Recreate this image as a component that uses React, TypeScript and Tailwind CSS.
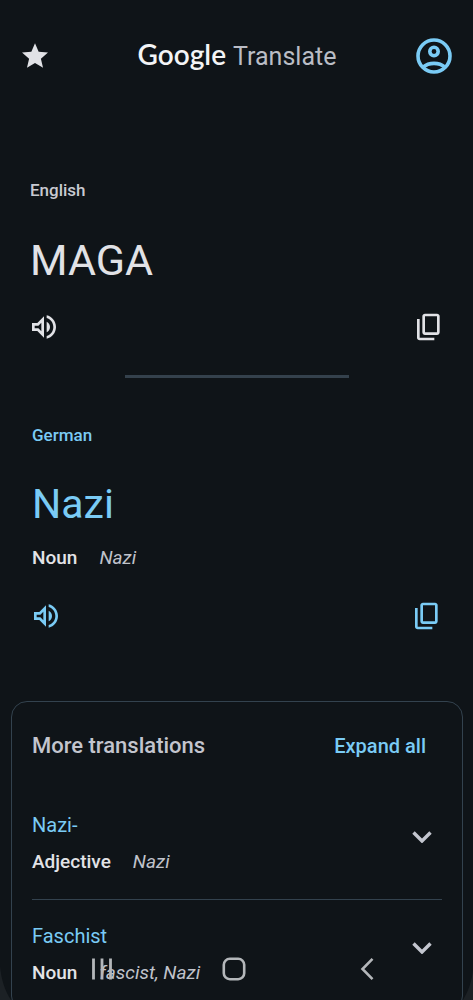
function SpeakerIcon() {
  return (
    <svg viewBox="0 0 24 24" className="size-8" fill="currentColor" aria-hidden="true">
      <path d="M3 9v6h4l5 5V4L7 9H3zm7-.17v6.34L7.83 13H5v-2h2.83L10 8.83zM16.5 12A4.5 4.5 0 0014 7.97v8.05c1.48-.73 2.5-2.25 2.5-4.02zM14 3.23v2.06c2.89.86 5 3.54 5 6.71s-2.11 5.85-5 6.71v2.06c4.01-.91 7-4.49 7-8.77s-2.99-7.86-7-8.77z" />
    </svg>
  );
}

function CopyIcon() {
  return (
    <svg viewBox="0 -960 960 960" className="size-8" fill="currentColor" aria-hidden="true">
      <path d="M360-240q-33 0-56.500-23.500T280-320v-480q0-33 23.500-56.500T360-880h360q33 0 56.500 23.500T800-800v480q0 33-23.500 56.500T720-240H360Zm0-80h360v-480H360v480ZM200-80q-33 0-56.500-23.500T120-160v-560h80v560h440v80H200Z" />
    </svg>
  );
}

function AccountIcon() {
  return (
    <svg viewBox="0 0 36 36" className="size-9" fill="none" stroke="currentColor" strokeWidth="3.600" aria-hidden="true">
      <circle cx="18" cy="18" r="16" />
      <circle cx="18" cy="13.500" r="4.200" />
      <path d="M7 29.200C9.800 26.800 13.600 25.400 18 25.400s8.200 1.400 11 3.800" />
    </svg>
  );
}

function ChevronIcon() {
  return (
    <svg viewBox="0 0 20 12" className="h-3 w-5" fill="none" stroke="currentColor" strokeWidth="3.400" aria-hidden="true">
      <path d="M1.500 1.500 10 10l8.500-8.500" />
    </svg>
  );
}

function Actions({ word }: { word: string }) {
  return (
    <div className="flex items-center justify-between">
      <button type="button" aria-label={`Listen to ${word}`}>
        <SpeakerIcon />
      </button>
      <button type="button" aria-label={`Copy ${word}`}>
        <CopyIcon />
      </button>
    </div>
  );
}

function Meaning({ kind, text }: { kind: string; text: string }) {
  return (
    <p className="flex gap-[22px] text-[19px] leading-6">
      <span className="font-medium text-[#e2e3e7]">{kind}</span>
      <i className="text-[#c0c3cb]">{text}</i>
    </p>
  );
}

function Translation({ word, kind, text }: { word: string; kind: string; text: string }) {
  return (
    <li className="flex justify-between">
      <div>
        <h3 className="mb-[11px] text-[20px] leading-7 text-[#7acbf5]">{word}</h3>
        <Meaning kind={kind} text={text} />
      </div>
      <button type="button" aria-label={`Expand ${word}`} className="mt-5 mr-2.5 self-start text-[#c3c6cf]">
        <ChevronIcon />
      </button>
    </li>
  );
}

export default function App() {
  return (
    <div className="relative flex min-h-screen flex-col overflow-hidden bg-[#0f1418] font-['Roboto',sans-serif] text-[#e1e2e6]">
      <header className="flex items-center justify-between pt-9 pr-[21px] pl-[22px]">
        <button type="button" aria-label="Saved" className="w-9">
          <svg viewBox="2 2 20 19" className="h-[25px] w-[26px]" fill="currentColor" aria-hidden="true">
            <path d="M12 17.270 18.180 21l-1.640-7.030L22 9.240l-7.190-.610L12 2 9.190 8.630 2 9.240l5.460 4.730L5.820 21z" />
          </svg>
        </button>
        <h1 className="flex items-baseline gap-[7px] leading-9">
          <span className="font-['Lato',sans-serif] text-[28px] font-semibold text-[#f3f4f6]">Google</span>
          <span className="text-[25px] text-[#babdc5]">Translate</span>
        </h1>
        <button type="button" aria-label="Account" className="text-[#7acbf5]">
          <AccountIcon />
        </button>
      </header>

      <main className="flex flex-1 flex-col">
        <section className="mt-[103px] px-7">
          <h2 className="pl-0.5 text-[17px] leading-6 font-medium text-[#c8cad1]">English</h2>
          <p className="mt-8 mb-[25px] pl-0.5 text-[43px] leading-[52px]">MAGA</p>
          <Actions word="MAGA" />
        </section>

        <hr className="mx-auto mt-8 h-[3px] w-56 border-0 bg-[#34414c]" />

        <section className="mt-[45px] px-[30px] text-[#7acbf5]">
          <h2 className="pl-0.5 text-[17px] leading-6 font-medium">German</h2>
          <p className="mt-[31px] mb-4 pl-0.5 text-[41px] leading-[52px]">Nazi</p>
          <div className="mb-[30px] pl-0.5">
            <Meaning kind="Noun" text="Nazi" />
          </div>
          <Actions word="Nazi" />
        </section>

        <section className="mt-[69px] mr-2.5 -mb-3 ml-[11px] flex-1 rounded-2xl border border-[#33424e] px-5 pt-7 pb-6">
          <div className="mb-[49px] flex items-center justify-between">
            <h2 className="text-[22px] leading-8 font-medium text-[#c3c5ce]">More translations</h2>
            <button type="button" className="mr-4 text-[20px] leading-8 font-medium text-[#7acbf5]">
              Expand all
            </button>
          </div>
          <ul>
            <Translation word="Nazi-" kind="Adjective" text="Nazi" />
            <li aria-hidden="true" className="mt-[25px] mb-[22px] h-px bg-[#33424e]" />
            <Translation word="Faschist" kind="Noun" text="fascist, Nazi" />
          </ul>
        </section>
      </main>

      <svg viewBox="0 0 11 34" className="absolute bottom-0 left-0 h-[34px] w-[11px]" fill="#1c2125" aria-hidden="true">
        <path d="M0 0C1 13 5 25 11 34H0z" />
      </svg>
      <svg viewBox="0 0 10 34" className="absolute right-0 bottom-0 h-[34px] w-2.5" fill="#1c2125" aria-hidden="true">
        <path d="M10 4C9 15 5 26 0 34H10z" />
      </svg>

      <nav className="fixed inset-x-0 bottom-[19px] grid grid-cols-3 pr-10 pl-9 text-[#b4b7ba]">
        <button type="button" aria-label="Recent apps" className="flex justify-center">
          <svg viewBox="0 0 20 24" className="h-6 w-5" fill="none" stroke="currentColor" strokeWidth="2.800" aria-hidden="true">
            <path d="M1.500 1.500v21M10 1.500v21M18.500 1.500v21" />
          </svg>
        </button>
        <button type="button" aria-label="Home" className="flex justify-center">
          <svg viewBox="0 0 24 24" className="size-6" fill="none" stroke="currentColor" strokeWidth="2.600" aria-hidden="true">
            <rect x="1.800" y="1.800" width="20.400" height="20.400" rx="6" />
          </svg>
        </button>
        <button type="button" aria-label="Back" className="flex justify-center">
          <svg viewBox="0 0 14 24" className="h-6 w-3.5" fill="none" stroke="currentColor" strokeWidth="2.600" aria-hidden="true">
            <path d="M12.500 1.800 2.500 12l10 10.200" />
          </svg>
        </button>
      </nav>
    </div>
  );
}
